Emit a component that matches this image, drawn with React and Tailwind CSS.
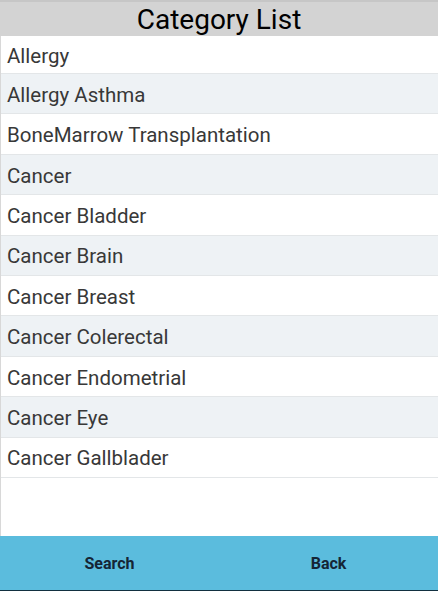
const categories = [
  'Allergy',
  'Allergy Asthma',
  'BoneMarrow Transplantation',
  'Cancer',
  'Cancer Bladder',
  'Cancer Brain',
  'Cancer Breast',
  'Cancer Colerectal',
  'Cancer Endometrial',
  'Cancer Eye',
  'Cancer Gallblader',
];

export default function App() {
  return (
    <div className="w-[438px] h-[591px] flex flex-col bg-white overflow-hidden" style={{ fontFamily: 'Roboto, "Liberation Sans", sans-serif' }}>
      <div className="h-[36px] shrink-0 flex items-center justify-center bg-[#d3d3d3] border-t-2 border-[#c6c6c6]">
        <h1 className="text-[28px] leading-none text-black pt-[2px]">Category List</h1>
      </div>
      <ul className="flex-1 border-l border-[#d8d8d8]">
        {categories.map((name, i) => (
          <li
            key={name}
            className={`flex items-center px-[6px] pt-[3px] border-b border-[#e3e6e8] text-[20.5px] text-[#383838] ${
              i === 0 ? 'h-[38px]' : 'h-[40.4px]'
            } ${i % 2 === 1 ? 'bg-[#eef2f5]' : 'bg-white'}`}
          >
            {name}
          </li>
        ))}
      </ul>
      <div className="h-[55px] shrink-0 grid grid-cols-2 bg-[#5bbcdd] border-b border-[#123040]">
        <button className="flex items-center justify-center pt-[2px] text-[16px] font-bold text-[#152535]">Search</button>
        <button className="flex items-center justify-center pt-[2px] text-[16px] font-bold text-[#152535]">Back</button>
      </div>
    </div>
  );
}
